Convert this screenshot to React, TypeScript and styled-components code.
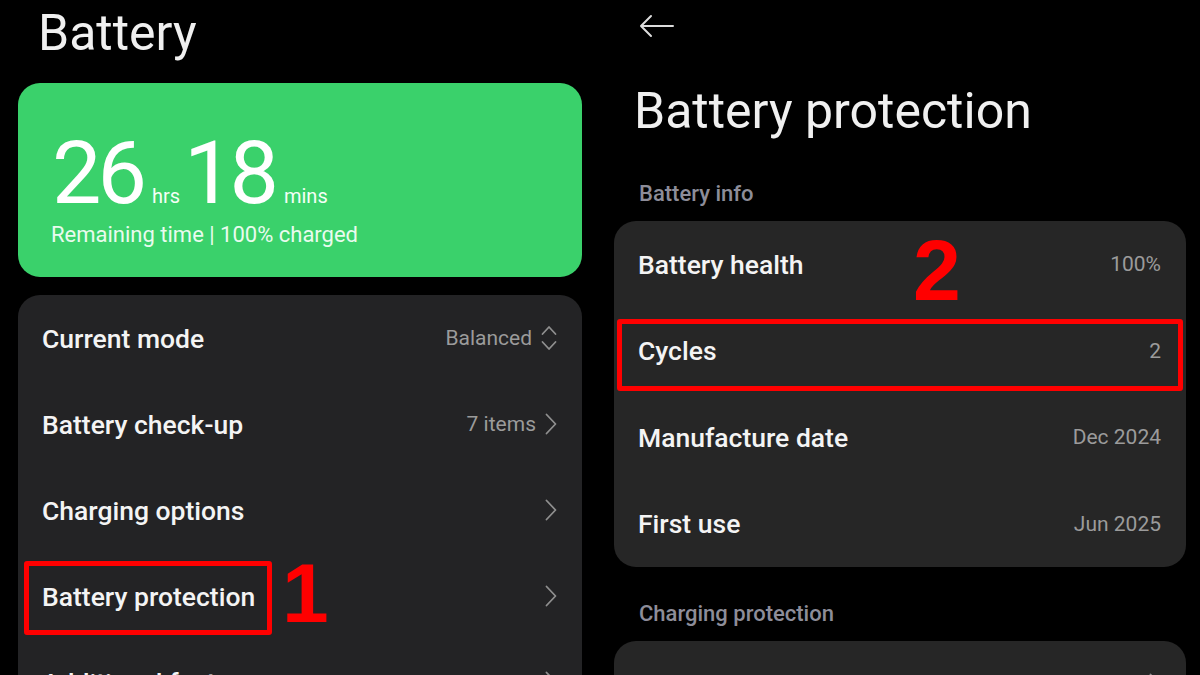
import React from 'react';
import styled, { createGlobalStyle } from 'styled-components';

const GlobalStyle = createGlobalStyle`
  html, body {
    margin: 0;
    padding: 0;
    background: #000;
  }
  body {
    font-family: Roboto, "Noto Sans", Arial, sans-serif;
    color: #f2f2f2;
    overflow: hidden;
  }
`;

const Page = styled.div`
  width: 1200px;
  height: 675px;
  display: grid;
  grid-template-columns: 600px 600px;
  background: #000;
  overflow: hidden;
`;

const Column = styled.div<{ $side: 'left' | 'right' }>`
  display: flex;
  flex-direction: column;
  padding: 0 ${(p) => (p.$side === 'left' ? '18px' : '14px')};
`;

const ScreenTitle = styled.h1<{ $top: number; $bottom: number }>`
  margin: ${(p) => p.$top}px 0 ${(p) => p.$bottom}px 0;
  font-size: 50px;
  line-height: 1;
  font-weight: 400;
  color: #f0f0f0;
  padding-left: 20px;
`;

const BackButton = styled.div`
  margin: 14px 0 0 25px;
  height: 24px;
  display: flex;
  align-items: center;
`;

const StatusCard = styled.div`
  height: 194px;
  box-sizing: border-box;
  background: #3ad16b;
  border-radius: 22px;
  padding: 46px 34px 0;
  margin-bottom: 18px;
`;

const TimeRow = styled.div`
  display: flex;
  align-items: baseline;
  color: #fff;
`;

const BigNumber = styled.span`
  font-size: 88px;
  line-height: 1;
  font-weight: 400;
  letter-spacing: -4px;
`;

const Unit = styled.span`
  font-size: 20px;
  margin: 0 4px 0 9px;
  color: #f4fff6;
`;

const StatusLine = styled.div`
  margin-top: 7px;
  font-size: 22px;
  line-height: 1;
  color: #e9fbee;
  margin-left: -1px;
`;

const ListCard = styled.div<{ $tone: string }>`
  background: ${(p) => p.$tone};
  border-radius: 22px;
  display: flex;
  flex-direction: column;
  flex-shrink: 0;
`;

const Row = styled.div<{ $height: number }>`
  position: relative;
  height: ${(p) => p.$height}px;
  display: flex;
  align-items: center;
  justify-content: space-between;
  padding: 0 25px 0 24px;
`;

const RowLabel = styled.span`
  font-size: 26.5px;
  font-weight: 500;
  color: #f4f4f4;
`;

const RowValue = styled.span`
  display: flex;
  align-items: center;
  gap: 9px;
  font-size: 21px;
  color: #9b9b9b;
`;

const SectionLabel = styled.div<{ $top: number }>`
  margin: ${(p) => p.$top}px 0 16px 25px;
  font-size: 22px;
  line-height: 1;
  font-weight: 500;
  color: #8d8d99;
`;

const Marker = styled.div<{ $top: number; $left: number; $width: number; $height: number }>`
  position: absolute;
  top: ${(p) => p.$top}px;
  left: ${(p) => p.$left}px;
  width: ${(p) => p.$width}px;
  height: ${(p) => p.$height}px;
  box-sizing: border-box;
  border: 5px solid #ff0000;
  border-radius: 3px;
  pointer-events: none;
`;

const StepNumber = styled.div<{ $top: number; $left: number; $size: number }>`
  position: absolute;
  top: ${(p) => p.$top}px;
  left: ${(p) => p.$left}px;
  font-family: "Liberation Sans", Arial, sans-serif;
  font-weight: 700;
  font-size: ${(p) => p.$size}px;
  line-height: 1;
  color: #ff0000;
`;

const Chevron = () => (
  <svg width="12" height="22" viewBox="0 0 12 22" fill="none">
    <path d="M1.5 1.5 L10.5 11 L1.5 20.5" stroke="#8f8f8f" strokeWidth="1.8" strokeLinecap="round" strokeLinejoin="round" />
  </svg>
);

const UpDown = () => (
  <svg width="16" height="26" viewBox="0 0 16 26" fill="none">
    <path d="M1.5 9 L8 2 L14.5 9" stroke="#8f8f8f" strokeWidth="1.8" strokeLinecap="round" strokeLinejoin="round" />
    <path d="M1.5 17 L8 24 L14.5 17" stroke="#8f8f8f" strokeWidth="1.8" strokeLinecap="round" strokeLinejoin="round" />
  </svg>
);

const BackArrow = () => (
  <svg width="36" height="24" viewBox="0 0 36 24" fill="none">
    <path d="M2 12 H34 M12 2 L2 12 L12 22" stroke="#dcdcdc" strokeWidth="2" strokeLinecap="round" strokeLinejoin="round" />
  </svg>
);

const batteryRows = [
  { label: 'Current mode', value: 'Balanced', icon: 'updown' },
  { label: 'Battery check-up', value: '7 items', icon: 'chevron' },
  { label: 'Charging options', value: '', icon: 'chevron' },
  { label: 'Battery protection', value: '', icon: 'chevron' },
  { label: 'Additional features', value: '', icon: 'chevron' },
];

const infoRows = [
  { label: 'Battery health', value: '100%' },
  { label: 'Cycles', value: '2' },
  { label: 'Manufacture date', value: 'Dec 2024' },
  { label: 'First use', value: 'Jun 2025' },
];

const App: React.FC = () => {
  return (
    <>
      <GlobalStyle />
      <Page>
        <Column $side="left">
          <ScreenTitle $top={8} $bottom={25}>Battery</ScreenTitle>
          <StatusCard>
            <TimeRow>
              <BigNumber>26</BigNumber>
              <Unit>hrs</Unit>
              <BigNumber>18</BigNumber>
              <Unit>mins</Unit>
            </TimeRow>
            <StatusLine>Remaining time | 100% charged</StatusLine>
          </StatusCard>
          <ListCard $tone="#232325">
            {batteryRows.map((row) => (
              <Row key={row.label} $height={86}>
                <RowLabel>{row.label}</RowLabel>
                <RowValue>
                  {row.value}
                  {row.icon === 'updown' ? <UpDown /> : <Chevron />}
                </RowValue>
                {row.label === 'Battery protection' && (
                  <>
                    <Marker $top={8} $left={6} $width={248} $height={74} />
                    <StepNumber $top={-2} $left={264} $size={84}>1</StepNumber>
                  </>
                )}
              </Row>
            ))}
          </ListCard>
        </Column>

        <Column $side="right">
          <BackButton>
            <BackArrow />
          </BackButton>
          <ScreenTitle $top={48} $bottom={0}>Battery protection</ScreenTitle>
          <SectionLabel $top={47}>Battery info</SectionLabel>
          <ListCard $tone="#262626">
            {infoRows.map((row) => (
              <Row key={row.label} $height={86.5}>
                <RowLabel>{row.label}</RowLabel>
                <RowValue>{row.value}</RowValue>
                {row.label === 'Battery health' && (
                  <StepNumber $top={6} $left={299} $size={86}>2</StepNumber>
                )}
                {row.label === 'Cycles' && (
                  <Marker $top={11} $left={3} $width={566} $height={72} />
                )}
              </Row>
            ))}
          </ListCard>
          <SectionLabel $top={36}>Charging protection</SectionLabel>
          <ListCard $tone="#262626">
            <Row $height={86}>
              <RowLabel>Smart charging</RowLabel>
              <RowValue>
                <Chevron />
              </RowValue>
            </Row>
          </ListCard>
        </Column>
      </Page>
    </>
  );
};

export default App;
